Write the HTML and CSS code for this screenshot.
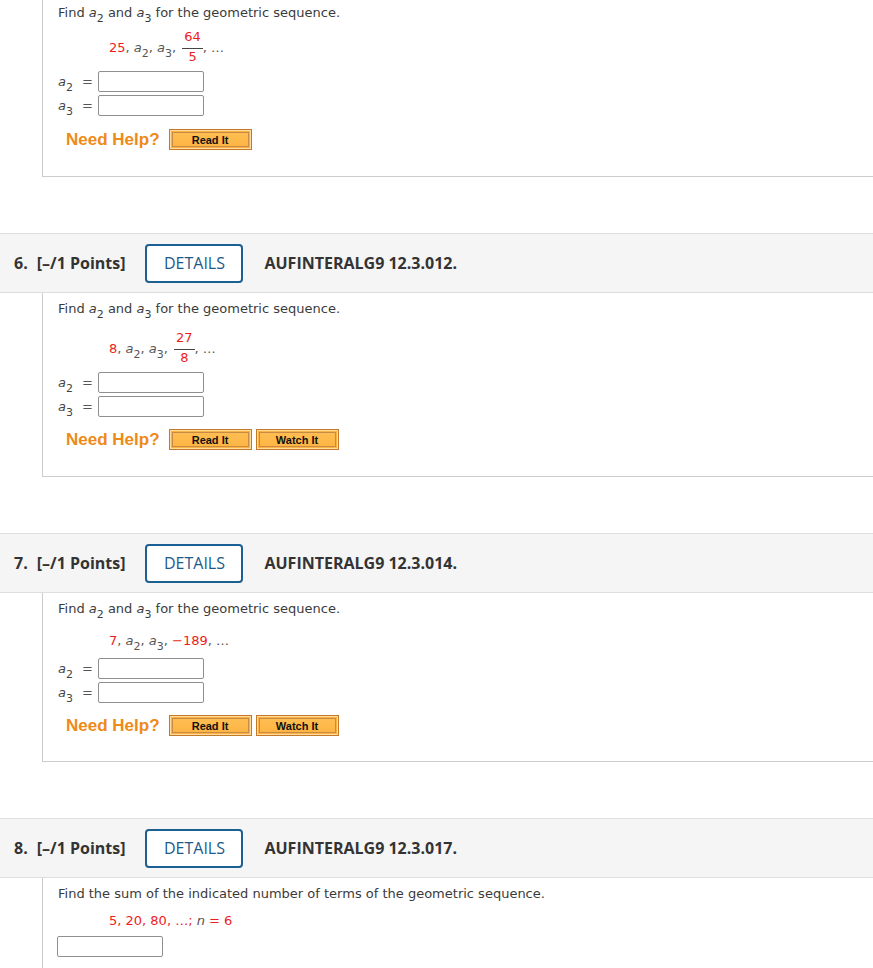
FILE: index.html
```html
<!DOCTYPE html>
<html lang="en">
<head>
<meta charset="utf-8">
<title>Geometric sequences</title>
<link rel="stylesheet" href="styles.css">
</head>
<body>
<div class="question">
  <div class="qbody qbody-first">
    <p class="prompt">Find <i>a</i><sub>2</sub> and <i>a</i><sub>3</sub> for the geometric sequence.</p>
    <div class="seq seq-frac seq-frac-first"><span class="red">25</span>, <i>a</i><sub>2</sub>, <i>a</i><sub>3</sub>, <span class="frac"><span class="num">64</span><span class="den">5</span></span>, …</div>
    <div class="answers answers-first">
      <div class="arow"><span class="lbl"><i>a</i><sub>2</sub><span class="eq">=</span></span><span class="field"></span></div>
      <div class="arow"><span class="lbl"><i>a</i><sub>3</sub><span class="eq">=</span></span><span class="field"></span></div>
    </div>
    <div class="help help-first">
      <span class="needhelp">Need Help?</span>
      <span class="hbtn">Read It</span>
    </div>
  </div>
</div>

<div class="question">
  <div class="qhead">
    <span class="qnum">6.</span>
    <span class="pts">[–/1 Points]</span>
    <span class="details">DETAILS</span>
    <span class="code">AUFINTERALG9 12.3.012.</span>
  </div>
  <div class="qbody">
    <p class="prompt">Find <i>a</i><sub>2</sub> and <i>a</i><sub>3</sub> for the geometric sequence.</p>
    <div class="seq seq-frac"><span class="red">8</span>, <i>a</i><sub>2</sub>, <i>a</i><sub>3</sub>, <span class="frac"><span class="num">27</span><span class="den">8</span></span>, …</div>
    <div class="answers answers-frac">
      <div class="arow"><span class="lbl"><i>a</i><sub>2</sub><span class="eq">=</span></span><span class="field"></span></div>
      <div class="arow"><span class="lbl"><i>a</i><sub>3</sub><span class="eq">=</span></span><span class="field"></span></div>
    </div>
    <div class="help">
      <span class="needhelp">Need Help?</span>
      <span class="hbtn">Read It</span>
      <span class="hbtn">Watch It</span>
    </div>
  </div>
</div>

<div class="question">
  <div class="qhead">
    <span class="qnum">7.</span>
    <span class="pts">[–/1 Points]</span>
    <span class="details">DETAILS</span>
    <span class="code">AUFINTERALG9 12.3.014.</span>
  </div>
  <div class="qbody qbody-7">
    <p class="prompt">Find <i>a</i><sub>2</sub> and <i>a</i><sub>3</sub> for the geometric sequence.</p>
    <div class="seq seq-line"><span class="red">7</span>, <i>a</i><sub>2</sub>, <i>a</i><sub>3</sub>, <span class="red">−189</span>, …</div>
    <div class="answers answers-line">
      <div class="arow"><span class="lbl"><i>a</i><sub>2</sub><span class="eq">=</span></span><span class="field"></span></div>
      <div class="arow"><span class="lbl"><i>a</i><sub>3</sub><span class="eq">=</span></span><span class="field"></span></div>
    </div>
    <div class="help help-7">
      <span class="needhelp">Need Help?</span>
      <span class="hbtn">Read It</span>
      <span class="hbtn">Watch It</span>
    </div>
  </div>
</div>

<div class="question">
  <div class="qhead">
    <span class="qnum">8.</span>
    <span class="pts">[–/1 Points]</span>
    <span class="details">DETAILS</span>
    <span class="code">AUFINTERALG9 12.3.017.</span>
  </div>
  <div class="qbody qbody-last">
    <p class="prompt">Find the sum of the indicated number of terms of the geometric sequence.</p>
    <div class="seq seq-plain"><span class="red">5, 20, 80, …; </span><i class="var">n</i><span class="red"> = 6</span></div>
    <div class="single"><span class="field"></span></div>
  </div>
</div>
</body>
</html>
```

FILE: styles.css
```css
html, body {
  margin: 0;
  padding: 0;
  background: #fff;
}

body {
  font-family: "DejaVu Sans", Verdana, sans-serif;
  font-size: 13px;
  color: #3b3b3b;
  overflow: hidden;
}

.question {
  margin-bottom: 56px;
}

.qhead {
  display: flex;
  align-items: center;
  height: 58px;
  padding-left: 14px;
  background: #f5f5f5;
  border-top: 1px solid #dedede;
  border-bottom: 1px solid #dedede;
  font-family: "Open Sans", "Liberation Sans", sans-serif;
  font-size: 16px;
  font-weight: 700;
  color: #333;
}

.qnum {
  margin-right: 9px;
}

.pts {
  margin-right: 20px;
}

.details {
  box-sizing: border-box;
  flex: none;
  width: 98px;
  height: 39px;
  display: flex;
  align-items: center;
  justify-content: center;
  border: 2px solid #1b5f93;
  border-radius: 4px;
  background: #fff;
  color: #1b5a8a;
  font-size: 16px;
  font-weight: 500;
  margin-right: 21px;
}

.qbody {
  margin-left: 42px;
  border-left: 1px solid #cccccc;
  border-bottom: 1px solid #cccccc;
  padding: 7px 0 26px 15px;
}

.qbody-first {
  padding-top: 4px;
}

.qbody-7 {
  padding-bottom: 25px;
}

.qbody-last {
  border-bottom: none;
  padding-bottom: 40px;
}

.prompt {
  margin: 0;
  line-height: 18px;
  color: #3b3b3b;
}

i {
  font-style: italic;
}

sub {
  font-size: 11px;
  line-height: 0;
  vertical-align: -5px;
}

.red {
  color: #ee1c1c;
}

.var {
  color: #555;
}

.seq {
  padding-left: 51px;
  color: #555;
  line-height: 18px;
  white-space: nowrap;
}

.seq-frac {
  margin-top: 13px;
  height: 36px;
  line-height: 36px;
}

.seq-frac-first {
  margin-top: 8px;
}

.seq-line {
  margin-top: 14px;
}

.seq-plain {
  margin-top: 9px;
}

.frac {
  display: inline-block;
  vertical-align: middle;
  text-align: center;
  color: #ee1c1c;
  margin-left: 2px;
  line-height: 16px;
  position: relative;
  top: -2px;
}

.num {
  display: block;
  padding: 0 2px 3px;
  border-bottom: 1px solid #444;
}

.den {
  display: block;
}

.answers-first {
  margin-top: 5px;
}

.answers-frac {
  margin-top: 5px;
}

.answers-line {
  margin-top: 8px;
}

.arow {
  display: flex;
  align-items: center;
  height: 21px;
  margin-bottom: 3px;
}

.arow:last-child {
  margin-bottom: 0;
}

.lbl {
  width: 40px;
  color: #444;
  line-height: 18px;
}

.eq {
  margin-left: 9px;
  color: #555;
}

.field {
  box-sizing: border-box;
  display: block;
  width: 106px;
  height: 21px;
  border: 1px solid #8f8f8f;
  border-radius: 2px;
  background: #fff;
}

.single {
  margin-top: 6px;
  margin-left: -1px;
}

.help {
  display: flex;
  align-items: center;
  margin-top: 12px;
  padding-left: 8px;
}

.help-first {
  margin-top: 13px;
}

.help-7 {
  margin-top: 12px;
}

.needhelp {
  font-family: "Liberation Sans", Arial, sans-serif;
  font-size: 17px;
  font-weight: 700;
  color: #ee8a18;
  margin-right: 9px;
}

.hbtn {
  box-sizing: border-box;
  width: 83px;
  height: 21px;
  display: flex;
  align-items: center;
  justify-content: center;
  margin-right: 4px;
  border: 1px solid #c4782a;
  background: linear-gradient(#ffc055, #fdb341);
  box-shadow: inset 0 0 0 1px #ffdc9c, inset 0 0 0 2px #fbb243, inset 0 0 0 3px #c98a45;
  font-family: "Liberation Sans", Arial, sans-serif;
  font-size: 11px;
  font-weight: 700;
  color: #111;
}
```
